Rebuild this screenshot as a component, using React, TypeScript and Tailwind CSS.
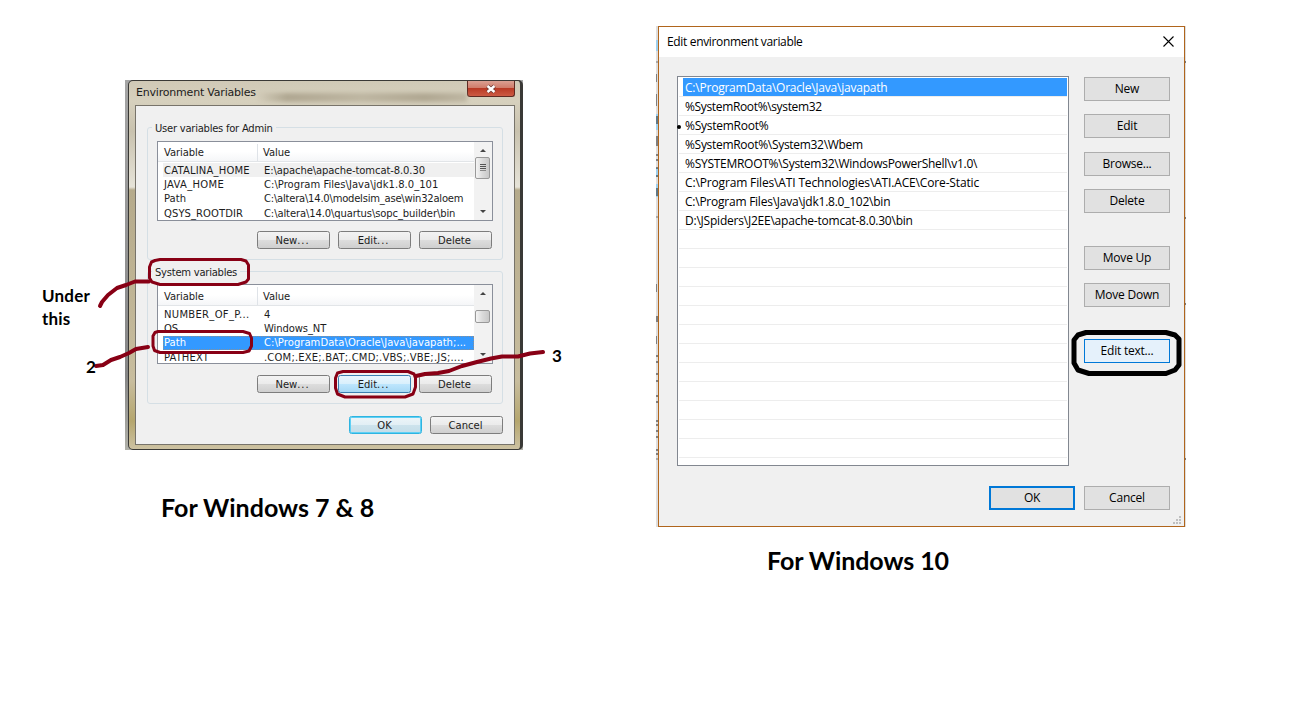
import React from "react";

const WIN7 = "font-['DejaVu_Sans','Verdana',sans-serif] text-[10px] text-[#1c1c1c]";
const WIN10 = "font-['Open_Sans','Noto_Sans',sans-serif] text-[12px] tracking-[-0.22px] text-black";

function AeroButton({ label, tone = "plain" }: { label: string; tone?: "plain" | "hot" | "default" }) {
  const tones = {
    plain: "border-[#7d7d7d] bg-[linear-gradient(#f3f3f3,#ebebeb_48%,#dddddd_50%,#cfcfcf)]",
    hot: "border-[#3c7fb1] bg-[linear-gradient(#eaf6fd,#d9f0fc_48%,#bee6fd_50%,#a7d9f5)]",
    default: "border-[#2fb4e0] bg-[linear-gradient(#eef5f8,#e2eff5_48%,#cde3ec_50%,#c4dde8)] shadow-[inset_0_0_0_1px_#5fd0f5]",
  };
  return (
    <div className={`flex h-[18px] w-[73px] items-center justify-center rounded-[2.5px] border pr-[2px] ${tones[tone]}`}>
      {label.endsWith("...") ? (
        <span>
          {label.slice(0, -3)}
          <span className="tracking-[0.9px]">...</span>
        </span>
      ) : (
        label
      )}
    </div>
  );
}

function Arrow({ up }: { up?: boolean }) {
  return (
    <svg width="8" height="5" viewBox="0 0 8 5">
      <path d={up ? "M1 4L4 1L7 4Z" : "M1 1L4 4L7 1Z"} fill="#444" />
    </svg>
  );
}

type Row = { name: string; value: string; state?: "gray" | "blue"; fit?: string; nameFit?: string };

function VariableList({ rows, thumb, tall }: { rows: Row[]; thumb: React.ReactNode; tall?: boolean }) {
  return (
    <div className="flex h-[80px] w-[336px] border border-[#8a8f9a] bg-white">
      <div className="flex w-[316px] flex-col overflow-hidden">
        <div
          className={`flex shrink-0 items-center border-b border-[#e2e5e8] bg-[linear-gradient(#fff_50%,#f5f6f8)] pt-[2px] tracking-[-0.1px] ${
            tall ? "h-[21px]" : "h-[20px]"
          }`}
        >
          <div className="flex h-full w-[100px] items-center border-r border-[#dfe3e8] pl-[6px]">Variable</div>
          <div className="pl-[5px]">Value</div>
        </div>
        <div className="flex flex-col pt-px pl-[5px]">
          {rows.map((r) => (
            <div
              key={r.name}
              className={`flex h-[14.4px] items-center whitespace-pre ${
                r.state === "gray" ? "bg-[#f0f0f0]" : r.state === "blue" ? "bg-[#3399ff] text-white outline-1 -outline-offset-1 outline-dotted outline-[#c98a4a]/60" : ""
              }`}
            >
              <div className={`w-[100px] pl-px ${r.nameFit ?? ""}`}>{r.name}</div>
              <div className={`pl-px ${r.fit ?? ""}`}>{r.value}</div>
            </div>
          ))}
        </div>
      </div>
      <div className="flex flex-1 flex-col items-center bg-[#f2f2f2] pt-[6px] pr-px pb-[6px]">
        <Arrow up />
        {thumb}
        <div className="flex-1" />
        <Arrow />
      </div>
    </div>
  );
}

function Group({ title, children, hot, className, gap }: { title: string; children: React.ReactNode; hot?: boolean; className: string; gap: string }) {
  return (
    <div className={`flex w-[356px] flex-col rounded-[3px] border border-[#d5dfe5] pl-[9px] ${className}`}>
      <div className="-mt-[7px] -ml-[5px] flex h-[14px] shrink-0 items-center self-start bg-[#f0f0f0] px-[3px] tracking-[-0.25px]">{title}</div>
      {children}
      <div className={`flex gap-[8px] pl-[100px] ${gap}`}>
        <AeroButton label="New..." />
        <AeroButton label="Edit..." tone={hot ? "hot" : "plain"} />
        <AeroButton label="Delete" />
      </div>
    </div>
  );
}

const userRows: Row[] = [
  { name: "CATALINA_HOME", value: "E:\\apache\\apache-tomcat-8.0.30", state: "gray", fit: "tracking-[-0.1px]", nameFit: "tracking-[0.18px]" },
  { name: "JAVA_HOME", value: "C:\\Program Files\\Java\\jdk1.8.0_101", fit: "tracking-[0.03px]", nameFit: "tracking-[0.3px]" },
  { name: "Path", value: "C:\\altera\\14.0\\modelsim_ase\\win32aloem", fit: "tracking-[-0.22px]" },
  { name: "QSYS_ROOTDIR", value: "C:\\altera\\14.0\\quartus\\sopc_builder\\bin", fit: "tracking-[-0.11px]", nameFit: "tracking-[0.08px]" },
];

const systemRows: Row[] = [
  { name: "NUMBER_OF_P...", value: "4", nameFit: "tracking-[0.3px]" },
  { name: "OS", value: "Windows_NT", fit: "tracking-[-0.1px]" },
  { name: "Path", value: "C:\\ProgramData\\Oracle\\Java\\javapath;...", state: "blue", fit: "tracking-[0.05px]" },
  { name: "PATHEXT", value: ".COM;.EXE;.BAT;.CMD;.VBS;.VBE;.JS;....", fit: "tracking-[0.18px]", nameFit: "tracking-[0.1px]" },
];

function Windows7Dialog() {
  return (
    <div className={`absolute top-[80px] left-[125px] flex h-[370px] w-[398px] bg-[linear-gradient(#a5a5a5,#858585_80%,#b0b0a8)] pl-[3px] ${WIN7}`}>
      <div className="flex w-[395px] flex-col overflow-hidden rounded-[5px] border-t border-r-[3px] border-b border-l border-[#3a3936] bg-[linear-gradient(#d0c9b6,#d6d0bd_20px,#c9c2ae_50px,#e6e3d8_106px,#b5aa8b_109px,#c8bd9e_300px,#b5a66e_340px,#cdc2a2)] pr-[5px] pl-[6px]">
        <div className="flex h-[24px] shrink-0 items-start justify-between">
          <div className="pt-[4px] pl-px text-[11px] leading-[16px] tracking-[-0.2px]">Environment Variables</div>
          <div className="h-[9px] flex-1 translate-y-[12px] bg-[linear-gradient(90deg,transparent,#8b8068_15%,#a79e88_50%,#8b8068_80%,#a79e88)] opacity-50 blur-[2px]" />
          <div className="flex h-[16px] w-[48px] items-center justify-center rounded-b-[3px] border border-t-0 border-[#5f2a22] bg-[linear-gradient(#dba092,#cf7a68_48%,#b93a25_50%,#cc5a43)]">
            <svg width="12" height="10" viewBox="0 0 12 10">
              <path d="M2.500 2L9.500 8M9.500 2L2.500 8" stroke="#6d3a33" strokeWidth="4" />
              <path d="M2.500 2L9.500 8M9.500 2L2.500 8" stroke="#fff" strokeWidth="2.4" />
            </svg>
          </div>
        </div>
        <div className="flex h-[340px] w-[380px] shrink-0 flex-col border border-[#77736a] bg-[#f0f0f0] pl-[11px]">
          <Group title="User variables for Admin" className="mt-[21px] h-[133px]" gap="mt-[10px]">
            <div className="mt-[6px]">
              <VariableList
                rows={userRows}
                thumb={
                  <div className="mt-[4px] flex h-[22px] w-[15px] flex-col items-center rounded-[2px] border border-[#999] bg-[linear-gradient(90deg,#f4f4f4,#dadada_50%,#c8c8c8)] pt-[6px]">
                    <div className="flex flex-col gap-px">
                      <div className="h-px w-[6px] bg-[#555]" />
                      <div className="h-px w-[6px] bg-[#555]" />
                      <div className="h-px w-[6px] bg-[#555]" />
                      <div className="h-px w-[6px] bg-[#888]" />
                    </div>
                  </div>
                }
              />
            </div>
          </Group>
          <Group title="System variables" className="mt-[11px] h-[133px]" hot gap="mt-[11px]">
            <div className="mt-[5px]">
              <VariableList
                tall
                rows={systemRows}
                thumb={<div className="mt-[14px] h-[13px] w-[15px] rounded-[2px] border border-[#999] bg-[linear-gradient(90deg,#f4f4f4,#dadada_50%,#c8c8c8)]" />}
              />
            </div>
          </Group>
          <div className="mt-[12px] flex gap-[8px] pl-[202px]">
            <AeroButton label="OK" tone="default" />
            <AeroButton label="Cancel" />
          </div>
        </div>
      </div>
    </div>
  );
}

function FlatButton({ label, className = "border border-[#adadad] bg-[#e1e1e1]" }: { label: string; className?: string }) {
  return <div className={`flex h-[24px] w-[86px] shrink-0 items-center justify-center pb-px ${className}`}>{label}</div>;
}

const paths: { text: string; fit: string }[] = [
  { text: "C:\\ProgramData\\Oracle\\Java\\javapath", fit: "tracking-[-0.22px]" },
  { text: "%SystemRoot%\\system32", fit: "tracking-[-0.35px]" },
  { text: "%SystemRoot%", fit: "tracking-[-0.25px]" },
  { text: "%SystemRoot%\\System32\\Wbem", fit: "tracking-[-0.3px]" },
  { text: "%SYSTEMROOT%\\System32\\WindowsPowerShell\\v1.0\\", fit: "tracking-[-0.27px]" },
  { text: "C:\\Program Files\\ATI Technologies\\ATI.ACE\\Core-Static", fit: "tracking-[-0.15px]" },
  { text: "C:\\Program Files\\Java\\jdk1.8.0_102\\bin", fit: "tracking-[-0.24px]" },
  { text: "D:\\JSpiders\\J2EE\\apache-tomcat-8.0.30\\bin", fit: "tracking-[-0.22px]" },
];

function Windows10Dialog() {
  return (
    <div className={`absolute top-[26px] left-[656px] flex ${WIN10}`}>
      <svg width="2" height="501" viewBox="0 0 2 501" className="shrink-0">
        <rect width="2" height="501" fill="#dedede" />
        <path d="M0 14H2V25H0ZM0 88H2V104H0ZM0 142H2V151H0ZM0 158H2V171H0Z" fill="#9fd0ee" />
        <path d="M0 36h2M0 191h2M0 433h2" stroke="#777" />
        <path d="M0 48v8M0 68v12M1 90v8M1 110v10M0 129h2M0 134h2M0 142h2M0 150h2M1 162v8M0 258v8M1 290v6M0 310v8M0 330h2M0 336h2M0 348h2M0 355h2M0 370h2M0 376h2M0 395h2M0 399h2M0 405h2M0 411h2M0 424h2M0 428h2" stroke="#222" />
      </svg>
      <div className="flex h-[501px] w-[527px] flex-col border border-[#b0651c] bg-[#f0f0f0]">
        <div className="flex h-[30px] shrink-0 items-center justify-between bg-white pr-[10px] pl-[8px]">
          <div className="tracking-[-0.34px]">Edit environment variable</div>
          <svg width="11" height="11" viewBox="0 0 11 11" className="-translate-y-px">
            <path d="M0.5 0.5L10.5 10.5M10.5 0.5L0.5 10.5" stroke="#000" strokeWidth="1.1" />
          </svg>
        </div>
        <div className="flex pt-[19px] pl-[18px]">
          <div className="flex h-[390px] w-[392px] flex-col border border-[#828790] bg-white px-px pt-px">
            {Array.from({ length: 20 }, (_, i) => (
              <div key={i} className="flex h-[19px] shrink-0 border-b border-[#ededed] pl-[4px]">
                <div className={`flex w-full items-center pt-[2px] pl-[2px] whitespace-pre ${paths[i]?.fit ?? ""} ${i === 0 ? "bg-[#3399ff] text-white" : ""}`}>
                  {paths[i]?.text ?? ""}
                </div>
              </div>
            ))}
          </div>
          <div className="flex flex-col pt-px pl-[15px]">
            <FlatButton label="New" />
            <div className="h-[13px]" />
            <FlatButton label="Edit" />
            <div className="h-[14px]" />
            <FlatButton label="Browse..." />
            <div className="h-[13px]" />
            <FlatButton label="Delete" />
            <div className="h-[33px]" />
            <FlatButton label="Move Up" />
            <div className="h-[13px]" />
            <FlatButton label="Move Down" />
            <div className="h-[32px]" />
            <FlatButton label="Edit text..." className="border border-[#0078d7] bg-[#e5f1fb]" />
          </div>
        </div>
        <div className="mt-[20px] flex gap-[9px] pl-[330px]">
          <FlatButton label="OK" className="border-2 border-[#0078d7] bg-[#e1e1e1]" />
          <FlatButton label="Cancel" />
        </div>
        <div className="flex justify-end pt-[6px] pr-[3px]">
          <svg width="8" height="8" viewBox="0 0 8 8" fill="#bfbfbf">
            <path d="M6 0h2v2H6zM3 3h2v2H3zM6 3h2v2H6zM0 6h2v2H0zM3 6h2v2H3zM6 6h2v2H6z" />
          </svg>
        </div>
      </div>
      <svg width="1" height="501" viewBox="0 0 1 501" className="shrink-0">
        <rect width="1" height="501" fill="#dedede" />
        <path d="M0 36h1M0 192h1M0 278h1M0 433h1" stroke="#555" strokeWidth="1.5" />
      </svg>
    </div>
  );
}

function Annotations() {
  return (
    <svg className="absolute top-0 left-0" width="1307" height="709" viewBox="0 0 1307 709" fill="none" strokeLinecap="round" strokeLinejoin="round">
      <g stroke="#880015" strokeWidth="3">
        <path d="M155 260.500L160 259.500H241L246 261L248.500 265V279L246 282L238 284.500H160L152 282L149.500 278V267L151.500 262Z" />
        <path d="M158 331.500H243L249.500 333.500L251.500 338V346L249 351L243 352.500H160L154.500 350.500L153 346V336L155 332.500Z" />
        <path d="M343 371.500H408L414 374L415.500 378V387L413 394L405 397H345L337.500 394L335.500 388V378L337.500 373Z" />
      </g>
      <g stroke="#880015" strokeWidth="4">
        <path d="M100 306L102 302L108 295L117 288L126 285L135 281.500H149" />
        <path d="M96 366L103 365L111 360L120 357L129 353L136 349L148 347" />
        <path d="M416 376L425 374L438 373L449 371L462 366L477 362L491 358.500L502 356.500H518L530 353.500L543 352" />
      </g>
      <path d="M1086 332.500H1166L1175 335L1179 339V365L1175 370L1166 373.500H1089L1078 370L1074 363V340L1078 335Z" stroke="#000" strokeWidth="5" />
      <circle cx="679" cy="127" r="2" fill="#000" />
    </svg>
  );
}

export default function App() {
  return (
    <div className="relative h-[709px] w-[1307px] overflow-hidden bg-white font-['Lato','Open_Sans',sans-serif] font-bold text-black">
      <div className="font-normal">
        <Windows7Dialog />
        <Windows10Dialog />
      </div>
      <Annotations />
      <div className="absolute top-[284px] left-[42px] text-[17px] leading-[23px] tracking-[0.2px]">Under<br />this</div>
      <div className="absolute top-[355px] left-[86px] text-[17px] leading-[23px]">2</div>
      <div className="absolute top-[344px] left-[552px] text-[17px] leading-[23px]">3</div>
      <div className="absolute top-[491px] left-[161px] text-[25px] leading-[32px] whitespace-nowrap">For Windows 7 &amp; 8</div>
      <div className="absolute top-[544px] left-[767px] text-[25px] leading-[32px] tracking-[-0.07px] whitespace-nowrap">For Windows 10</div>
    </div>
  );
}
